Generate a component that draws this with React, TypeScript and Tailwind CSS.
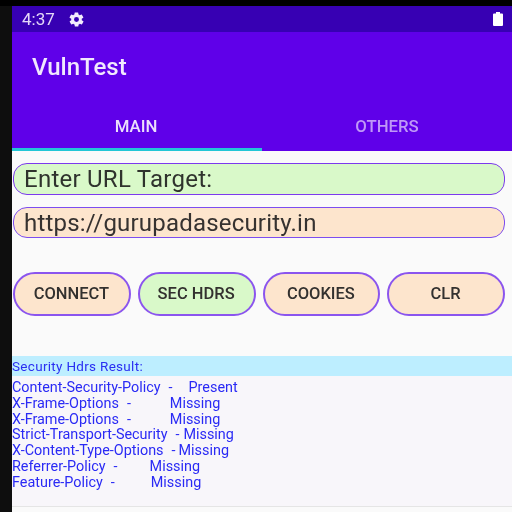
import React from 'react';

const results = [
  { name: 'Content-Security-Policy', gap: 'w-[16px]', value: 'Present' },
  { name: 'X-Frame-Options', gap: 'w-[39px]', value: 'Missing' },
  { name: 'X-Frame-Options', gap: 'w-[39px]', value: 'Missing' },
  { name: 'Strict-Transport-Security', gap: 'w-[4px]', value: 'Missing' },
  { name: 'X-Content-Type-Options', gap: 'w-[3px]', value: 'Missing' },
  { name: 'Referrer-Policy', gap: 'w-[32px]', value: 'Missing' },
  { name: 'Feature-Policy', gap: 'w-[36px]', value: 'Missing' },
];

const buttons = [
  { label: 'CONNECT', bg: 'bg-[#fde5cd]' },
  { label: 'SEC HDRS', bg: 'bg-[#d9f9c9]' },
  { label: 'COOKIES', bg: 'bg-[#fde5cd]' },
  { label: 'CLR', bg: 'bg-[#fde5cd]' },
];

const App = () => {
  return (
    <div className="w-[512px] h-[512px] bg-black flex flex-col overflow-hidden font-['Roboto',sans-serif]">
      <div className="h-[6px] shrink-0" />
      <div className="flex flex-1 min-h-0">
        <div className="w-[12px] shrink-0 bg-[#0e0e0e]" />
        <div className="flex-1 flex flex-col bg-[#fafafa] blur-[0.35px]">
          {/* Status bar */}
          <div className="h-[26px] bg-[#3700b3] flex items-center pl-[10px] pr-[9px] text-[#e4d8f8]">
            <span className="text-[17px] leading-none">4:37</span>
            <svg viewBox="0 0 24 24" className="w-[17px] h-[17px] ml-[13px]" fill="#f3ecfd">
              <path d="M19.4 13a7.6 7.6 0 0 0 0-2l2.1-1.6a.5.5 0 0 0 .1-.6l-2-3.5a.5.5 0 0 0-.6-.2l-2.5 1a7.3 7.3 0 0 0-1.7-1l-.4-2.7a.5.5 0 0 0-.5-.4h-4a.5.5 0 0 0-.5.4l-.4 2.7a7.3 7.3 0 0 0-1.7 1l-2.5-1a.5.5 0 0 0-.6.2l-2 3.5a.5.5 0 0 0 .1.6L4.6 11a7.6 7.6 0 0 0 0 2l-2.1 1.6a.5.5 0 0 0-.1.6l2 3.5c.1.2.4.3.6.2l2.5-1c.5.4 1.1.7 1.7 1l.4 2.7c0 .2.2.4.5.4h4c.3 0 .5-.2.5-.4l.4-2.7c.6-.3 1.2-.6 1.7-1l2.5 1c.2.1.5 0 .6-.2l2-3.5a.5.5 0 0 0-.1-.6L19.4 13zM12 15.5a3.5 3.5 0 1 1 0-7 3.5 3.5 0 0 1 0 7z" />
            </svg>
            <svg viewBox="0 0 10 14" className="w-[10px] h-[14px] ml-auto" fill="#ffffff">
              <path d="M3 0h4v1.500h2a1 1 0 0 1 1 1V13a1 1 0 0 1-1 1H1a1 1 0 0 1-1-1V2.500a1 1 0 0 1 1-1h2z" />
            </svg>
          </div>

          {/* App bar */}
          <div className="h-[119px] bg-[#5f00e9] flex flex-col">
            <div className="h-[70px] flex items-center pl-[20px]">
              <span className="text-[24px] font-medium text-[#f1e8fd] leading-none">VulnTest</span>
            </div>
            <div className="flex-1 flex">
              <div className="w-[250px] flex flex-col">
                <div className="flex-1 flex items-center justify-center pt-[3px] pr-[2px] text-[16.800px] font-medium text-[#ece0fc]">MAIN</div>
                <div className="h-[3px] bg-[#22c6d6]" />
              </div>
              <div className="flex-1 flex flex-col">
                <div className="flex-1 flex items-center justify-center pt-[3px] text-[16.800px] font-medium text-[#bf98f7]">OTHERS</div>
                <div className="h-[3px]" />
              </div>
            </div>
          </div>

          {/* Inputs */}
          <div className="pl-px pr-[7px] pt-[12px] flex flex-col gap-[12px]">
            <div className="h-[32px] rounded-[14px] border-[1.500px] border-[#7c3aed] bg-[#d9f9c9] pl-[10px] flex items-center text-[24px] text-[#2f332d] tracking-[0.25px]">
              Enter URL Target:
            </div>
            <div className="h-[31px] rounded-[14px] border-[1.500px] border-[#7c4df0] bg-[#fde5cd] pl-[10px] flex items-center text-[24px] text-[#363230] tracking-[0.2px]">
              https://gurupadasecurity.in
            </div>
          </div>

          {/* Buttons */}
          <div className="pl-px pr-[7px] mt-[34px] grid grid-cols-4 gap-[7px]">
            {buttons.map((b) => (
              <div
                key={b.label}
                className={`h-[44px] rounded-[22px] border-2 border-[#8b55ee] ${b.bg} flex items-center justify-center pt-px pr-px text-[16.500px] font-medium text-[#33312f]`}
              >
                {b.label}
              </div>
            ))}
          </div>

          {/* Result */}
          <div className="mt-[40px] h-[20px] bg-[#bdeeff] flex items-center text-[13.500px] tracking-[0.3px] text-[#2a2ff2]">
            Security Hdrs Result:
          </div>
          <div className="pt-[4px] bg-[#f8f6fa] h-[131px] border-b border-[#e5e5e5] text-[14.400px] leading-[15.800px] text-[#2a2af5]">
            {results.map((r, i) => (
              <div key={i} className="flex whitespace-pre">
                <span>{r.name}</span>
                <span className="ml-[8px]">-</span>
                <span className={`${r.gap} shrink-0`} />
                <span>{r.value}</span>
              </div>
            ))}
          </div>
        </div>
      </div>
    </div>
  );
};

export default App;
